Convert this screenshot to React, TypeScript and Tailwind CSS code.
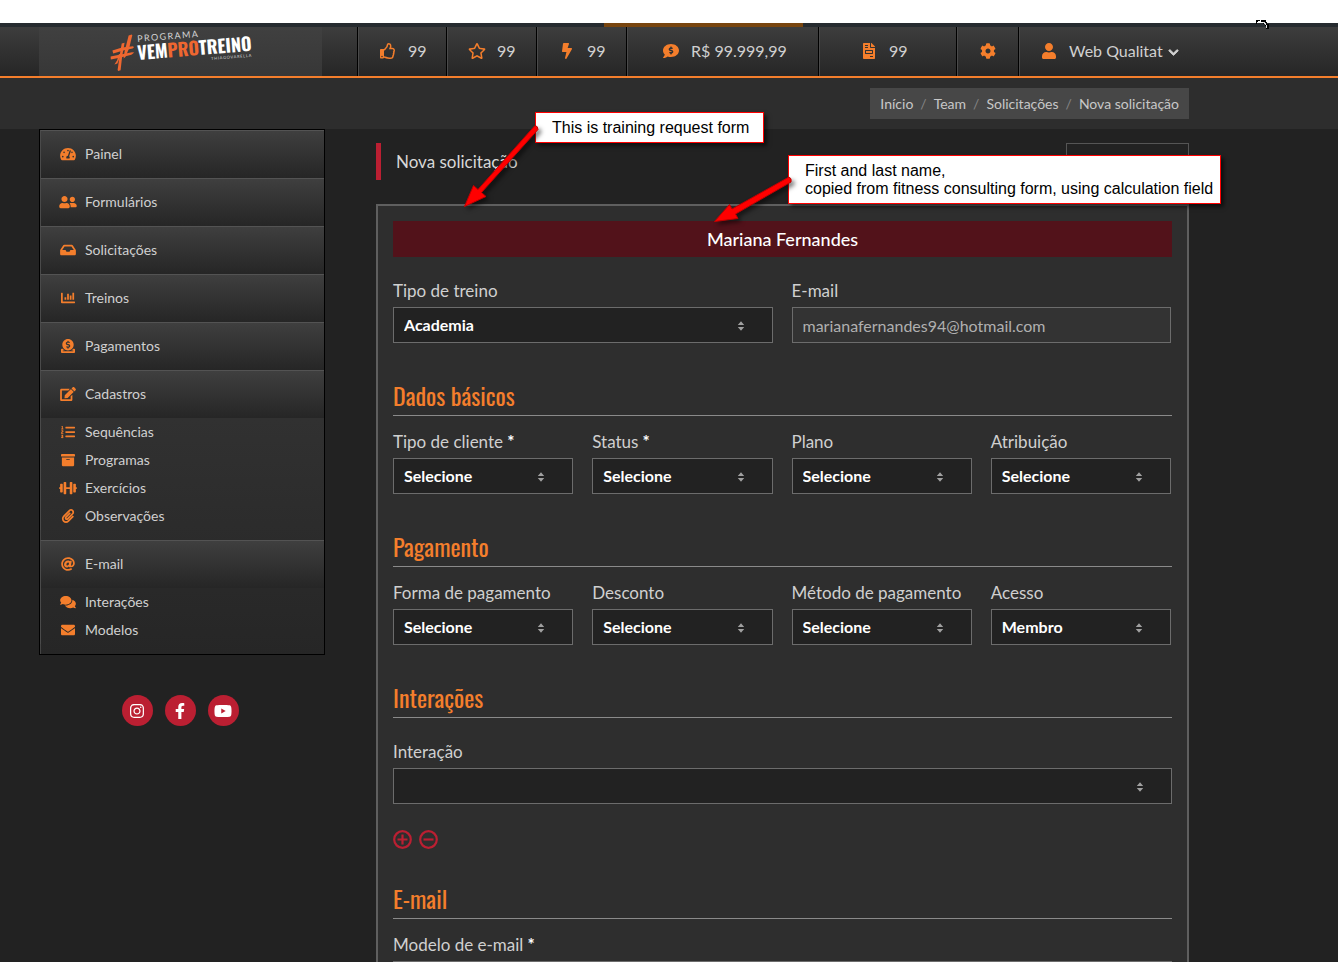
import type { ReactNode } from "react";
import type { IconType } from "react-icons";
import {
  FaArchive,
  FaAt,
  FaBolt,
  FaChartBar,
  FaChevronDown,
  FaCog,
  FaCommentDollar,
  FaComments,
  FaDonate,
  FaDumbbell,
  FaEdit,
  FaEnvelope,
  FaFacebookF,
  FaFileInvoice,
  FaInbox,
  FaInstagram,
  FaListOl,
  FaPaperclip,
  FaRegStar,
  FaRegThumbsUp,
  FaTachometerAlt,
  FaUser,
  FaUserFriends,
  FaYoutube,
} from "react-icons/fa";

type MenuItem = { label: string; icon: IconType; children?: MenuItem[] };

const menu: MenuItem[] = [
  { label: "Painel", icon: FaTachometerAlt },
  { label: "Formulários", icon: FaUserFriends },
  { label: "Solicitações", icon: FaInbox },
  { label: "Treinos", icon: FaChartBar },
  { label: "Pagamentos", icon: FaDonate },
  {
    label: "Cadastros",
    icon: FaEdit,
    children: [
      { label: "Sequências", icon: FaListOl },
      { label: "Programas", icon: FaArchive },
      { label: "Exercícios", icon: FaDumbbell },
      { label: "Observações", icon: FaPaperclip },
    ],
  },
  {
    label: "E-mail",
    icon: FaAt,
    children: [
      { label: "Interações", icon: FaComments },
      { label: "Modelos", icon: FaEnvelope },
    ],
  },
];

const counters: { icon: IconType; value: string; className: string }[] = [
  { icon: FaRegThumbsUp, value: "99", className: "w-[89px] pl-5" },
  { icon: FaRegStar, value: "99", className: "w-[90px] pl-5" },
  { icon: FaBolt, value: "99", className: "w-[90px] pl-5" },
  { icon: FaCommentDollar, value: "R$ 99.999,99", className: "w-48 pl-[34px]" },
  { icon: FaFileInvoice, value: "99", className: "w-[138px] pl-10" },
];

const socials: { label: string; icon: IconType }[] = [
  { label: "Instagram", icon: FaInstagram },
  { label: "Facebook", icon: FaFacebookF },
  { label: "YouTube", icon: FaYoutube },
];

const cell =
  "flex h-full items-center border-l border-black pb-0.5 text-base text-[#d0d0d0] shadow-[inset_1px_0_0_#4a4a4a]";

function Logo() {
  return (
    <svg
      width="142"
      height="42"
      viewBox="0 0 142 42"
      role="img"
      aria-label="Programa Vem Pro Treino"
      className="overflow-visible"
    >
      <g fill="#ee6730">
        <path d="M18.6 5.6 21.6 4.4 22.3 5.2 19.2 18 15.4 27 13.6 28.4 14.6 21.6Z" />
        <path d="M11.7 13.4 14.6 12.7 12.2 26 10.6 40.3 8.2 41 7.6 40 9.4 27.2Z" />
        <path d="M2.4 20.6 12 17.6 23 16.2 24 17.2 22.6 18.6 13.2 20.4 3.2 23.6Z" />
        <path d="M.6 26.6 10.6 24.4 22 22.2 24.3 22.6 21.4 24.8 10.8 27.4 .8 29.4Z" />
        <path d="M7 30.4 9 24 11 24.4 7.4 33.6 4.4 34.4Z" />
      </g>
      <g transform="rotate(-4.6 27 30)">
        <text x="29" y="12" fontSize="9" letterSpacing="1.4" fill="#d4d4d4" fontFamily="Lato, sans-serif">
          PROGRAMA
        </text>
        <text x="28" y="30" fontSize="18" fontWeight="700" fill="#fff" fontFamily="Oswald, sans-serif">
          VEM<tspan fill="#ee6730">PRO</tspan>TREINO
        </text>
        <text x="101" y="36" fontSize="4" letterSpacing="0.7" fill="#d4d4d4" fontFamily="Lato, sans-serif">
          THIAGOVARELLA
        </text>
      </g>
    </svg>
  );
}

function Header() {
  return (
    <header className="h-[51px] border-b-2 border-[#f47e2c] bg-linear-to-b from-[#3d3d3d] to-[#262626]">
      <div className="flex h-full pl-[39px]">
        <a href="#" className="flex h-full w-[283px] shrink-0 justify-center bg-linear-to-b from-[#404040] to-[#373737] pt-[3px]">
          <Logo />
        </a>
        <div className="ml-[35px] flex h-full shrink-0">
          {counters.map(({ icon: Icon, value, className }, i) => (
            <a key={i} href="#" className={`${cell} ${className}`}>
              <Icon className="mr-[10px] h-4 w-5 text-[#f47e2c]" />
              {value}
            </a>
          ))}
          <button type="button" aria-label="Configurações" className={`${cell} w-[62px] justify-center`}>
            <FaCog className="h-4 w-5 text-[#f47e2c]" />
          </button>
          <button type="button" className={`${cell} pl-5`}>
            <FaUser className="mr-[10px] h-4 w-5 text-[#f47e2c]" />
            Web Qualitat
            <FaChevronDown size={11} stroke="currentColor" strokeWidth={40} className="mt-1 ml-[5px]" />
          </button>
        </div>
      </div>
    </header>
  );
}

function Breadcrumb() {
  const crumbs = ["Início", "Team", "Solicitações", "Nova solicitação"];
  return (
    <nav aria-label="breadcrumb" className="flex h-[51px] max-w-[1189px] items-center justify-end">
      <ol className="flex h-[31px] items-center bg-[#474747] px-[10px] text-sm text-[#c8c8c8]">
        {crumbs.map((crumb, i) => (
          <li key={crumb} className="flex">
            {i > 0 && <span className="px-[7px] text-[#858585]">/</span>}
            <a href="#">{crumb}</a>
          </li>
        ))}
      </ol>
    </nav>
  );
}

function MenuLink({ item, className }: { item: MenuItem; className: string }) {
  const Icon = item.icon;
  return (
    <a href="#" className={`flex items-center border-l border-[#4a4a4a] pl-[18px] text-sm text-[#d0d0d0] ${className}`}>
      <Icon className="mr-2 h-[14px] w-[18px] text-[#f47e2c]" />
      {item.label}
    </a>
  );
}

function Sidebar() {
  return (
    <aside className="w-[286px] shrink-0">
      <ul className="border border-black bg-linear-to-b from-[#3f3f3f] to-[#262626]">
        {menu.map((item) => (
          <li key={item.label}>
            <MenuLink
              item={item}
              className="h-12 border-t border-t-[#535353] bg-linear-to-b from-[#3f3f3f] to-[#262626] pb-0.5"
            />
            {item.children && (
              <ul className="pb-[10px] shadow-[inset_1px_0_0_#444]">
                {item.children.map((child) => (
                  <li key={child.label}>
                    <MenuLink item={child} className="h-7" />
                  </li>
                ))}
              </ul>
            )}
          </li>
        ))}
      </ul>
      <div className="mt-10 flex justify-center gap-3 pr-1">
        {socials.map(({ label, icon: Icon }) => (
          <a
            key={label}
            href="#"
            aria-label={label}
            className="flex size-[31px] items-center justify-center rounded-full bg-[#bb1f32] text-white"
          >
            <Icon className="h-4 w-5" />
          </a>
        ))}
      </div>
    </aside>
  );
}

function Label({ htmlFor, required, children }: { htmlFor: string; required?: boolean; children: ReactNode }) {
  return (
    <label htmlFor={htmlFor} className="mb-1 block text-[17px] leading-6 whitespace-nowrap text-[#d0d0d0]">
      {children}
      {required && <b className="text-white"> *</b>}
    </label>
  );
}

function SelectField({
  id,
  label,
  value = "Selecione",
  required,
}: {
  id: string;
  label: string;
  value?: string;
  required?: boolean;
}) {
  return (
    <div>
      <Label htmlFor={id} required={required}>
        {label}
      </Label>
      <div className="relative">
        <select
          id={id}
          className="block h-9 w-full appearance-none border border-[#6c6c6c] bg-[#222] px-[10px] text-base font-bold text-white"
        >
          <option>{value}</option>
        </select>
        <svg
          className="pointer-events-none absolute top-[14px] right-7 text-[#a0a0a0]"
          width="8"
          height="10"
          viewBox="0 0 8 10"
          fill="currentColor"
        >
          <path d="M4 .3 7.2 4H.8ZM4 9.7.8 6h6.4Z" />
        </svg>
      </div>
    </div>
  );
}

function SectionTitle({ className = "mt-9", children }: { className?: string; children: ReactNode }) {
  return (
    <h2
      className={`border-b border-[#8a8a8a] pb-1 font-[Oswald,sans-serif] text-2xl leading-8 text-[#f47e2c] ${className}`}
    >
      {children}
    </h2>
  );
}

function RoundButton({ label, plus }: { label: string; plus?: boolean }) {
  return (
    <button type="button" aria-label={label} className="text-[#bb1f32]">
      <svg width="19" height="19" viewBox="0 0 19 19" fill="none" stroke="currentColor" strokeWidth="2.2">
        <circle cx="9.5" cy="9.5" r="8.3" />
        <path d={plus ? "M4.5 9.5h10M9.5 4.5v10" : "M4.5 9.5h10"} />
      </svg>
    </button>
  );
}

function RequestForm() {
  return (
    <main className="min-w-0 flex-1 pt-[14px]">
      <div className="flex h-[37px] items-center justify-between">
        <h1 className="flex h-full items-center border-l-5 border-[#bb1f32] pl-[15px] text-[17px] text-[#d8d8d8]">
          Nova solicitação
        </h1>
        <button type="button" aria-label="Voltar" className="h-full w-[123px] border border-[#555] bg-[#222]" />
      </div>

      <form className="mt-6 border-2 border-[#5f5f5f] bg-[#2e2e2e] p-[15px]">
        <p className="bg-[#52121a] text-center text-lg leading-9 font-medium text-white">Mariana Fernandes</p>

        <div className="mt-[22px] grid grid-cols-2 gap-[19px] pr-px">
          <SelectField id="tipo-treino" label="Tipo de treino" value="Academia" />
          <div>
            <Label htmlFor="email">E-mail</Label>
            <input
              id="email"
              type="email"
              readOnly
              value="marianafernandes94@hotmail.com"
              className="block h-9 w-full border border-[#6c6c6c] bg-[#333] px-[10px] text-base text-[#b0b0b0]"
            />
          </div>
        </div>

        <SectionTitle>Dados básicos</SectionTitle>
        <div className="mt-[14px] grid grid-cols-4 gap-[19px] pr-px">
          <SelectField id="tipo-cliente" label="Tipo de cliente" required />
          <SelectField id="status" label="Status" required />
          <SelectField id="plano" label="Plano" />
          <SelectField id="atribuicao" label="Atribuição" />
        </div>

        <SectionTitle>Pagamento</SectionTitle>
        <div className="mt-[14px] grid grid-cols-4 gap-[19px] pr-px">
          <SelectField id="forma-pagamento" label="Forma de pagamento" />
          <SelectField id="desconto" label="Desconto" />
          <SelectField id="metodo-pagamento" label="Método de pagamento" />
          <SelectField id="acesso" label="Acesso" value="Membro" />
        </div>

        <SectionTitle>Interações</SectionTitle>
        <div className="mt-[22px]">
          <SelectField id="interacao" label="Interação" value="" />
        </div>
        <div className="mt-[23px] flex h-6 items-center gap-[7px]">
          <RoundButton label="Adicionar interação" plus />
          <RoundButton label="Remover interação" />
        </div>

        <SectionTitle className="mt-[31px]">E-mail</SectionTitle>
        <div className="mt-[14px]">
          <SelectField id="modelo-email" label="Modelo de e-mail" required />
        </div>
      </form>
    </main>
  );
}

/* Review notes pinned over the page */
function Annotations() {
  const note =
    "absolute border border-[#f00] bg-white px-4 pt-[6px] pb-[5px] font-['Liberation_Sans',Arial,sans-serif] text-base leading-[18px] whitespace-pre text-black shadow-[3px_3px_4px_rgba(0,0,0,0.55)]";
  return (
    <div className="pointer-events-none absolute inset-0">
      <p className={`${note} top-28 left-[535px] w-[229px]`}>This is training request form</p>
      <p className={`${note} top-[155px] left-[788px] w-[433px]`}>
        {"First and last name,\ncopied from fitness consulting form, using calculation field"}
      </p>
      <svg
        className="absolute top-[120px] left-[455px] drop-shadow-[3px_3px_2px_rgba(0,0,0,0.5)]"
        width="345"
        height="110"
        viewBox="455 120 345 110"
        fill="#f00"
        stroke="#c00000"
        strokeWidth="1"
      >
        <path d="M535 125.5 478 189.5 473.5 185.5 464.5 206.5 486 196.5 481.5 192.5 538 129.5Q538 126 535 125.5Z" />
        <path d="M789 177 732 209 729.5 204.5 714.5 221.5 738 218.5 735.5 214 791 182Q792 178 789 177Z" />
      </svg>
      <svg className="absolute top-5 left-[1256px]" width="14" height="10" viewBox="0 0 14 10">
        <path d="M0 0h4v1H2v1H1v2H0ZM5 0h5v2h1v2h2v5h-3V6H9V4H7V2H5Z" fill="#000" />
        <path d="M7 2h2v1h1v2h1v3h-1V5H9V4H8V3H7Z" fill="#ddd" />
      </svg>
    </div>
  );
}

export default function App() {
  return (
    <div className="relative min-h-screen bg-[#222] font-[Lato,sans-serif]">
      <div className="h-[23px] bg-white" />
      <div className="h-1 bg-[#262b2f] pl-[604px]">
        <div className="h-full w-[199px] bg-[#78450f]" />
      </div>
      <Header />
      <div className="bg-[#2d2d2d]">
        <Breadcrumb />
      </div>
      <div className="flex max-w-[1189px] gap-[51px] pl-[39px]">
        <Sidebar />
        <RequestForm />
      </div>
      <Annotations />
    </div>
  );
}
